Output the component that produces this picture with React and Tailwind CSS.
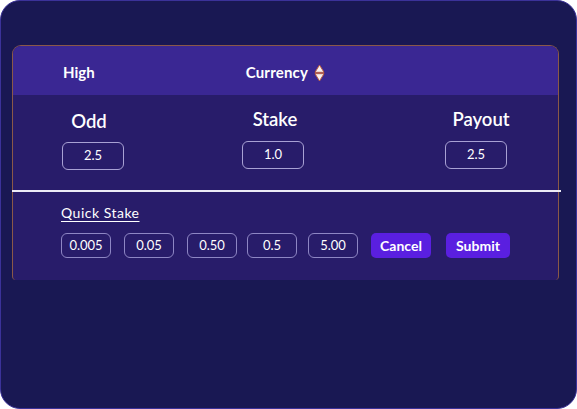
import React from 'react';

const quick = [
  { v: '0.005', ml: '' },
  { v: '0.05', ml: 'ml-[13px]' },
  { v: '0.50', ml: 'ml-[13px]' },
  { v: '0.5', ml: 'ml-[10px]' },
  { v: '5.00', ml: 'ml-[11px]' },
];

function SortIcon() {
  return (
    <svg width="11" height="18" viewBox="0 0 11 18" className="ml-[6px]">
      <path d="M5.5 1 L10 8.3 L1 8.3 Z" fill="#f6eef0" stroke="#c0613f" strokeWidth="1" strokeLinejoin="round" />
      <path d="M1 9.7 L10 9.7 L5.5 17 Z" fill="#f6eef0" stroke="#c0613f" strokeWidth="1" strokeLinejoin="round" />
    </svg>
  );
}

function Field({ label, value, labelClass }) {
  return (
    <div className="flex flex-col items-center w-[62px]">
      <div className={`text-[18.5px] font-semibold text-white leading-none whitespace-nowrap ${labelClass}`}>{label}</div>
      <div className="mt-[12px] w-full h-[28px] rounded-[6px] border border-[#a8a1d4] flex items-center justify-center text-[13px] text-white">
        {value}
      </div>
    </div>
  );
}

export default function App() {
  return (
    <div className="w-[577px] h-[409px] rounded-[20px] border border-[#3b3299] bg-[#191853] pt-[44px] pl-[11px] pr-[17px] font-['Lato',sans-serif]">
      <div className="rounded-t-[9px] rounded-b-[4px] border-l border-t border-r border-[#8a5848] bg-[#281c6a]">
        {/* Header */}
        <div className="h-[49px] pt-[4px] rounded-t-[8px] bg-[#3a2793] flex items-center text-[15px] font-bold text-white">
          <span className="ml-[50px]">High</span>
          <span className="ml-[151px] flex items-center tracking-[0.2px]">
            Currency
            <SortIcon />
          </span>
        </div>

        {/* Fields */}
        <div className="flex items-start pt-[15px] h-[95px]">
          <div className="ml-[49px]">
            <Field label="Odd" value="2.5" labelClass="mr-[8px] mt-[2px] mb-[-1px]" />
          </div>
          <div className="ml-[118px]">
            <Field label="Stake" value="1.0" labelClass="ml-[4px]" />
          </div>
          <div className="ml-[141px]">
            <Field label="Payout" value="2.5" labelClass="ml-[10px]" />
          </div>
        </div>

        <div className="h-[2px] bg-[#ecebf6] -mr-[3px] -ml-[1px]" />

        {/* Quick stake */}
        <div className="pl-[48px] pt-[14px] pb-[22px]">
          <div className="text-[14px] tracking-[0.5px] text-white underline underline-offset-[3px] leading-none">Quick Stake</div>
          <div className="flex items-center mt-[13px] text-[13px] text-white">
            {quick.map((q) => (
              <div
                key={q.v}
                className={`w-[50px] h-[25px] rounded-[6px] border border-[#8e86c4] flex items-center justify-center ${q.ml}`}
              >
                {q.v}
              </div>
            ))}
            <button className="ml-[13px] w-[60px] h-[25px] rounded-[5px] bg-[#5a1fe0] text-[14px] font-bold text-white">Cancel</button>
            <button className="ml-[15px] w-[64px] h-[25px] rounded-[5px] bg-[#5a1fe0] text-[14px] font-bold text-white">Submit</button>
          </div>
        </div>
      </div>
    </div>
  );
}
